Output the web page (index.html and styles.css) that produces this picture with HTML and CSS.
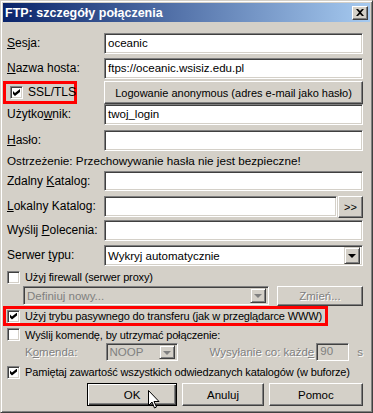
FILE: index.html
```html
<!DOCTYPE html>
<html lang="pl">
<head>
  <meta charset="UTF-8">
  <title>FTP: szczegóły połączenia</title>
  <link rel="stylesheet" href="styles.css">
</head>
<body>

  <div class="win">
    <div class="titlebar">
      <span class="title">FTP: szczegóły połączenia</span>
      <span class="close">
        <svg width="8" height="7" viewBox="0 0 8 7"><path d="M0 0h2l2 2 2-2h2L5 3.5 8 7H6L4 5 2 7H0l3-3.5z" fill="#000"/></svg>
      </span>
    </div>

    <div class="content">
      <div class="row r25">
        <label class="lbl"><u>S</u>esja:</label>
        <div class="field">oceanic</div>
      </div>
      <div class="row r23">
        <label class="lbl"><u>N</u>azwa hosta:</label>
        <div class="field">ftps://oceanic.wsisiz.edu.pl</div>
      </div>
      <div class="row r23">
        <div class="lbl">
          <div class="mark ssl">
            <span class="check on"></span>
            <span>SSL/TLS</span>
          </div>
        </div>
        <div class="btn wide">Logowanie anonymous (adres e-mail jako hasło)</div>
      </div>
      <div class="row r26">
        <label class="lbl">Użytko<u>w</u>nik:</label>
        <div class="field">twoj_login</div>
      </div>
      <div class="row r21">
        <label class="lbl"><u>H</u>asło:</label>
        <div class="field"></div>
      </div>
      <div class="note">Ostrzeżenie: Przechowywanie hasła nie jest bezpieczne!</div>
      <div class="row r25">
        <label class="lbl">Zdalny <u>K</u>atalog:</label>
        <div class="field short"></div>
      </div>
      <div class="row r24">
        <label class="lbl"><u>L</u>okalny Katalog:</label>
        <div class="field"></div>
        <div class="btn browse">&gt;&gt;</div>
      </div>
      <div class="row r25">
        <label class="lbl">Wyślij <u>P</u>olecenia:</label>
        <div class="field"></div>
      </div>
      <div class="row r23">
        <label class="lbl">Serwer <u>t</u>ypu:</label>
        <div class="field combo">
          <span class="value">Wykryj automatycznie</span>
          <span class="drop"><i class="tri"></i></span>
        </div>
      </div>

      <div class="opt r18">
        <span class="check"></span>
        <span>Użyj firewall (serwer proxy)</span>
      </div>
      <div class="row r20 indent">
        <div class="field combo off">
          <span class="value">Definiuj nowy...</span>
          <span class="drop"><i class="tri"></i></span>
        </div>
        <div class="btn change off">Zmień...</div>
      </div>

      <div class="opt r20 passive">
        <span class="check on"></span>
        <span>Użyj trybu pasywnego do transferu (jak w przeglądarce WWW)</span>
      </div>
      <div class="opt r17">
        <span class="check"></span>
        <span>Wyślij komendę, by utrzymać połączenie:</span>
      </div>
      <div class="row r19 keep">
        <span class="dim cmd-lbl">K<u>o</u>menda:</span>
        <div class="field combo off noop">
          <span class="value">NOOP</span>
          <span class="drop"><i class="tri"></i></span>
        </div>
        <span class="dim every">Wysyłanie co: każd<u>e</u></span>
        <div class="field off secs">90</div>
        <span class="dim unit">s</span>
      </div>
      <div class="opt r20">
        <span class="check on"></span>
        <span>Pamiętaj zawartość wszystkich odwiedzanych katalogów (w buforze)</span>
      </div>

      <div class="actions">
        <div class="btn default"><span>OK</span></div>
        <div class="btn action">Anuluj</div>
        <div class="btn action">Pomoc</div>
      </div>
    </div>

    <svg class="cursor" width="12" height="20" viewBox="0 0 12 20">
      <path d="M0.5 0.5v15l3.5-3.5 2.5 6 2-1-2.5-5.5h5z" fill="#fff" stroke="#000"/>
    </svg>
  </div>

</body>
</html>
```

FILE: styles.css
```css
* {
  box-sizing: border-box;
}

body {
  margin: 0;
  font-family: "Liberation Sans", Arial, sans-serif;
  font-size: 12px;
  color: #000;
  background: #d4d0c8;
}

.win {
  position: relative;
  width: 373px;
  height: 413px;
  background: #d4d0c8;
  border: 1px solid;
  border-color: #d4d0c8 #404040 #404040 #d4d0c8;
  box-shadow: inset 1px 1px #fff, inset -1px -1px #808080;
  padding: 2px;
  white-space: nowrap;
}

.titlebar {
  display: flex;
  align-items: center;
  justify-content: space-between;
  height: 19px;
  padding: 0 2px 0 2px;
  background: linear-gradient(to right, #0a246a, #a6caf0);
}

.title {
  color: #fff;
  font-weight: bold;
  font-size: 12.5px;
}

.close {
  display: flex;
  align-items: center;
  justify-content: center;
  width: 16px;
  height: 14px;
  background: #d4d0c8;
  border: 1px solid;
  border-color: #fff #404040 #404040 #fff;
  box-shadow: inset -1px -1px #808080;
}

.content {
  padding: 11px 0 0 4px;
  width: 360px;
}

.row {
  display: flex;
  align-items: flex-start;
}

.r17 { height: 17px; }
.r18 { height: 18px; }
.r19 { height: 19px; }
.r20 { height: 20px; }
.r21 { height: 21px; }
.r23 { height: 23px; }
.r24 { height: 24px; }
.r25 { height: 25px; }
.r26 { height: 26px; }

.lbl {
  width: 97px;
  flex: none;
  line-height: 21px;
}

u {
  text-decoration: underline;
  text-underline-offset: 1px;
}

/* sunken edit field */
.field {
  flex: 1;
  height: 21px;
  padding: 0 3px;
  line-height: 18px;
  font-size: 11.5px;
  background: #fff;
  border: 1px solid;
  border-color: #808080 #fff #fff #808080;
  box-shadow: inset 1px 1px #404040, inset -1px -1px #d4d0c8;
  overflow: hidden;
}

.field.short {
  height: 20px;
}

.field.off {
  background: #d4d0c8;
  color: #808080;
}

.combo {
  display: flex;
  align-items: center;
  justify-content: space-between;
  padding: 0 2px 0 3px;
}

.drop {
  display: flex;
  align-items: center;
  justify-content: center;
  width: 16px;
  height: 17px;
  background: #d4d0c8;
  border: 1px solid;
  border-color: #d4d0c8 #404040 #404040 #d4d0c8;
  box-shadow: inset 1px 1px #fff, inset -1px -1px #808080;
}

.tri {
  width: 0;
  height: 0;
  border-left: 4px solid transparent;
  border-right: 4px solid transparent;
  border-top: 4px solid #000;
  margin-top: 1px;
}

.off .tri {
  border-top-color: #808080;
}

/* raised push button */
.btn {
  display: flex;
  align-items: center;
  justify-content: center;
  background: #d4d0c8;
  border: 1px solid;
  border-color: #fff #404040 #404040 #fff;
  box-shadow: inset -1px -1px #808080;
  font-size: 11.5px;
}

.btn.wide {
  flex: 1;
  height: 23px;
  font-size: 11px;
}

.btn.browse {
  width: 25px;
  height: 22px;
  margin-left: 1px;
  font-size: 11px;
}

.btn.off {
  color: #808080;
  text-shadow: 1px 1px #fff;
}

.btn.change {
  width: 86px;
  height: 20px;
  margin-left: 8px;
}

.indent {
  padding-left: 16px;
}

.indent .combo {
  height: 19px;
}

.indent .drop {
  height: 15px;
}

/* checkboxes */
.check {
  position: relative;
  flex: none;
  width: 13px;
  height: 13px;
  background: #fff;
  border: 1px solid;
  border-color: #808080 #fff #fff #808080;
  box-shadow: inset 1px 1px #404040, inset -1px -1px #d4d0c8;
}

.check.on::after {
  content: "";
  position: absolute;
  left: 2px;
  top: 2px;
  width: 7px;
  height: 7px;
  background: #000;
  clip-path: polygon(0 28%, 28% 57%, 100% 0, 100% 43%, 28% 100%, 0 71%);
}

.opt {
  display: flex;
  align-items: center;
  gap: 5px;
  font-size: 11px;
  letter-spacing: -0.15px;
}

.mark {
  display: flex;
  align-items: center;
  gap: 5px;
}

.ssl {
  width: 74px;
  height: 23px;
  margin-left: -4px;
  padding-left: 4px;
  border: 3px solid #f00;
}

.passive {
  width: 325px;
  margin-left: -4px;
  padding-left: 1px;
  border: 3px solid #f00;
}

.note {
  height: 20px;
  line-height: 20px;
  font-size: 11.7px;
}

.dim {
  color: #808080;
  text-shadow: 1px 1px #fff;
  font-size: 11.5px;
  line-height: 18px;
}

.keep .cmd-lbl {
  width: 102px;
  padding-left: 18px;
}

.noop {
  flex: none;
  width: 72px;
  height: 18px;
}

.noop .drop {
  height: 14px;
}

.every {
  margin-left: 32px;
}

.secs {
  flex: none;
  width: 33px;
  height: 18px;
  line-height: 14px;
  margin-left: 2px;
}

.unit {
  margin-left: 8px;
}

.actions {
  display: flex;
  gap: 5px;
  padding-left: 80px;
  margin-top: 1px;
}

.btn.action {
  height: 23px;
  width: 82px;
}

.btn.action:last-child {
  width: 95px;
}

.btn.default {
  width: 91px;
  height: 23px;
  border: 1px solid #000;
  box-shadow: inset 1px 1px #fff, inset -1px -1px #404040, inset -2px -2px #808080;
}

.cursor {
  position: absolute;
  left: 147px;
  top: 389px;
}
```
